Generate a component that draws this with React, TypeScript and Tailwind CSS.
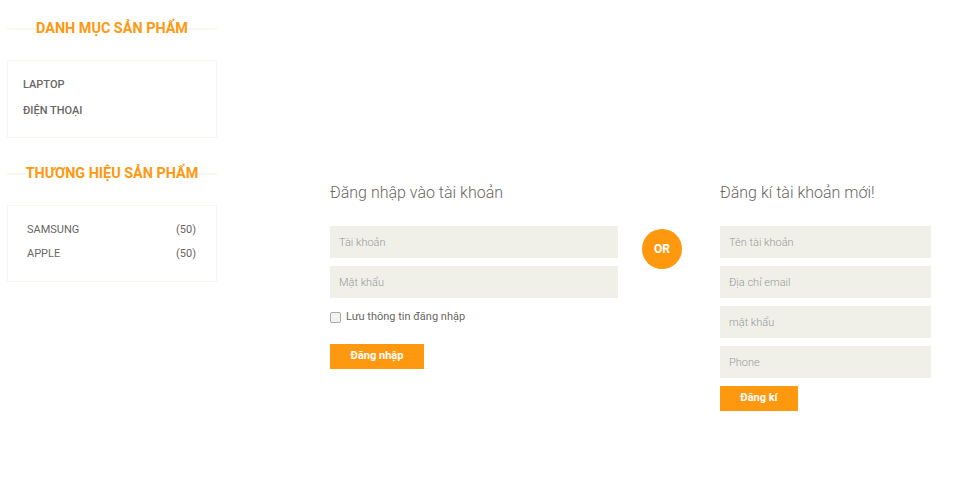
import React from "react";

const font = { fontFamily: "Roboto, 'Noto Sans', sans-serif" };

function SideHeading({ text }: { text: string }) {
  return (
    <div className="relative flex justify-center items-center h-[20px]">
      <div className="absolute left-0 right-0 top-1/2 h-[2px] -translate-y-1/2 bg-[#f7f7f0]" />
      <h2 className="relative bg-white px-0 text-[14.4px] font-bold uppercase text-[#fe980f] leading-none">
        {text}
      </h2>
    </div>
  );
}

function Input({ placeholder }: { placeholder: string }) {
  return (
    <input
      placeholder={placeholder}
      className="h-[32px] w-full bg-[#f0f0e9] px-[9px] text-[11px] text-[#696763] placeholder:text-[#999] outline-none font-light"
      style={font}
    />
  );
}

export default function App() {
  return (
    <div className="w-[976px] h-[492px] bg-white flex" style={font}>
      <aside className="w-[210px] ml-[7px] pt-[19px] flex flex-col">
        <SideHeading text="DANH MỤC SẢN PHẨM" />
        <div className="mt-[21px] border border-[#f7f7f0] h-[78px] pl-[15px] pt-[17px] flex flex-col gap-[12px] text-[11px] font-medium text-[#696763]">
          <div className="leading-[14px]">LAPTOP</div>
          <div className="leading-[14px]">ĐIỆN THOẠI</div>
        </div>
        <div className="mt-[26px]">
          <SideHeading text="THƯƠNG HIỆU SẢN PHẨM" />
        </div>
        <div className="mt-[21px] border border-[#f7f7f0] h-[77px] pl-[19px] pr-[20px] pt-[17px] flex flex-col gap-[10px] text-[11px] text-[#696763]">
          <div className="flex justify-between leading-[14px]"><span>SAMSUNG</span><span>(50)</span></div>
          <div className="flex justify-between leading-[14px]"><span>APPLE</span><span>(50)</span></div>
        </div>
      </aside>

      <main className="ml-[113px] pt-[182px] flex">
        <div className="w-[288px] flex flex-col">
          <h2 className="text-[16px] font-light text-[#696763] leading-[22px]">Đăng nhập vào tài khoản</h2>
          <div className="mt-[22px] flex flex-col gap-[8px]">
            <Input placeholder="Tài khoản" />
            <Input placeholder="Mật khẩu" />
          </div>
          <label className="mt-[12px] flex items-center gap-[5px] text-[11px] text-[#696763] leading-[14px]">
            <span className="w-[11px] h-[11px] rounded-[2px] border border-[#aaa] bg-[#f3f3f3] inline-block" />
            Lưu thông tin đăng nhập
          </label>
          <button className="mt-[20px] w-[94px] h-[25px] bg-[#fe980f] text-white text-[11px] font-bold">
            Đăng nhập
          </button>
        </div>
        <div className="ml-[24px] w-[40px] pt-[47px]">
          <div className="w-[40px] h-[40px] rounded-full bg-[#fe980f] text-white font-bold text-[12px] flex items-center justify-center">
            OR
          </div>
        </div>
        <div className="ml-[38px] w-[211px] flex flex-col">
          <h2 className="text-[16px] font-light text-[#696763] leading-[22px]">Đăng kí tài khoản mới!</h2>
          <div className="mt-[22px] flex flex-col gap-[8px]">
            <Input placeholder="Tên tài khoản" />
            <Input placeholder="Địa chỉ email" />
            <Input placeholder="mật khẩu" />
            <Input placeholder="Phone" />
          </div>
          <button className="mt-[8px] w-[78px] h-[25px] bg-[#fe980f] text-white text-[11px] font-bold">
            Đăng kí
          </button>
        </div>
      </main>
    </div>
  );
}
